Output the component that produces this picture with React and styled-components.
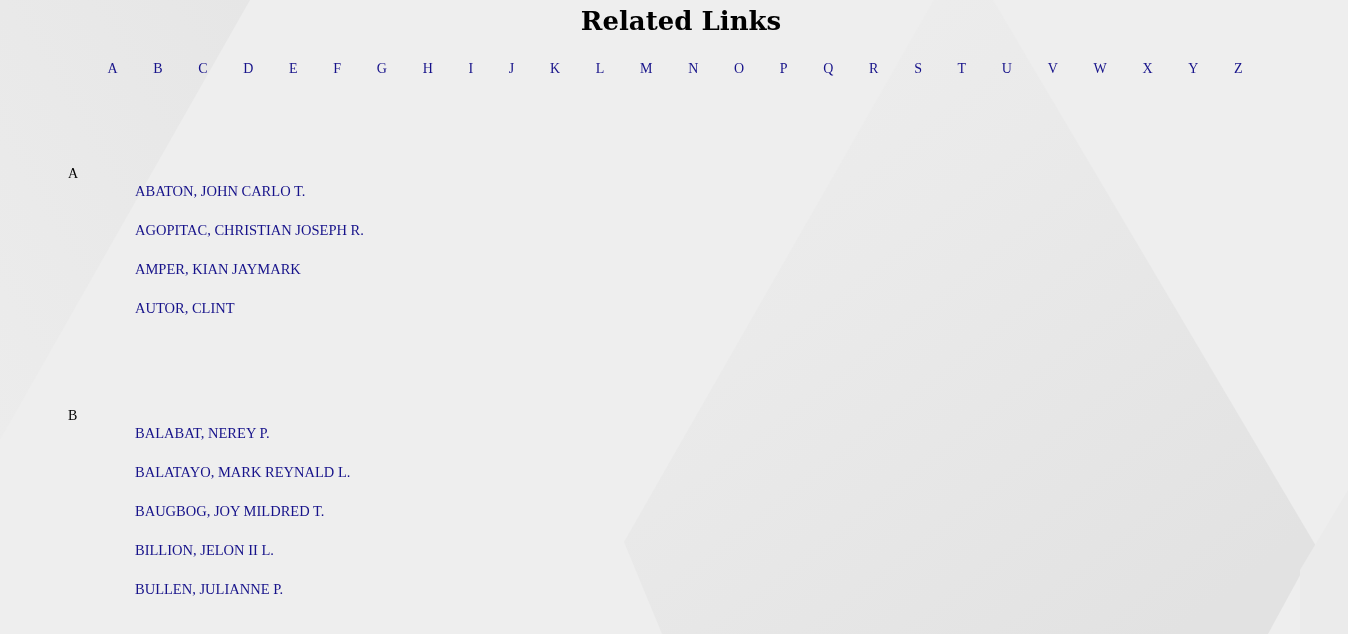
import styled, { createGlobalStyle } from "styled-components"

const GlobalStyle = createGlobalStyle`
    html, body {
        margin: 0;
        padding: 0;
        background-color: #eeeeee;
        font-family: "Liberation Serif", "DejaVu Serif", serif;
    }
`

const letters = "ABCDEFGHIJKLMNOPQRSTUVWXYZ".split("")

const groups = [
    {
        letter: "A",
        names: [
            "ABATON, JOHN CARLO T.",
            "AGOPITAC, CHRISTIAN JOSEPH R.",
            "AMPER, KIAN JAYMARK",
            "AUTOR, CLINT",
        ],
    },
    {
        letter: "B",
        names: [
            "BALABAT, NEREY P.",
            "BALATAYO, MARK REYNALD L.",
            "BAUGBOG, JOY MILDRED T.",
            "BILLION, JELON II L.",
            "BULLEN, JULIANNE P.",
        ],
    },
]

const Backdrop = () => {
    return (
        <Svg viewBox="0 0 1348 634" preserveAspectRatio="none">
            <defs>
                <linearGradient id="big" x1="0" y1="0" x2="0.8" y2="1">
                    <stop offset="0" stopColor="#efefef" />
                    <stop offset="0.45" stopColor="#eaeaea" />
                    <stop offset="1" stopColor="#e2e2e2" />
                </linearGradient>
                <linearGradient id="corner" x1="1" y1="0" x2="0" y2="1">
                    <stop offset="0" stopColor="#e6e6e6" />
                    <stop offset="1" stopColor="#ececec" />
                </linearGradient>
            </defs>
            <polygon points="0,0 250,0 0,440" fill="url(#corner)" />
            <polygon points="963,-51 1316,546 1268,634 662,634 624,542" fill="url(#big)" />
            <polygon points="1348,490 1348,634 1300,634 1300,570" fill="#ebebeb" />
        </Svg>
    )
}

const App = () => {
    return (
        <Page>
            <GlobalStyle />
            <Backdrop />
            <Title>Related Links</Title>
            <Nav>
                {letters.map((l) => (
                    <NavLink key={l} href={"#" + l}>{l}</NavLink>
                ))}
            </Nav>
            <Groups>
                {groups.map((g) => (
                    <Group key={g.letter} id={g.letter}>
                        <Label>{g.letter}</Label>
                        <List>
                            {g.names.map((n) => (
                                <Item key={n}>
                                    <NameLink href="#">{n}</NameLink>
                                </Item>
                            ))}
                        </List>
                    </Group>
                ))}
            </Groups>
        </Page>
    )
}

export default App

const Svg = styled.svg`
    position: fixed;
    top: 0;
    left: 0;
    width: 100vw;
    height: 100vh;
    z-index: 0;
    pointer-events: none;
`

const Page = styled.div`
    position: relative;
    min-height: 100vh;
`

const Title = styled.h1`
    position: relative;
    margin: 0;
    font-family: "DejaVu Serif", "Liberation Serif", serif;
    font-size: 26px;
    line-height: 43px;
    font-weight: bold;
    text-align: center;
    color: #000;
    padding-left: 14px;
`

const Nav = styled.nav`
    position: relative;
    display: flex;
    justify-content: center;
    gap: 35.7px;
    margin-top: 16px;
    padding-left: 2px;
    line-height: 20px;
    font-size: 14px;
`

const NavLink = styled.a`
    color: #16128a;
    text-decoration: none;
`

const Groups = styled.div`
    position: relative;
    padding-left: 68px;
    padding-top: 87px;
    display: flex;
    flex-direction: column;
    gap: 91px;
`

const Group = styled.div`
    display: flex;
    flex-direction: column;
`

const Label = styled.div`
    font-size: 14px;
    line-height: 16px;
    color: #000;
`

const List = styled.ul`
    list-style: none;
    margin: 0 0 0 67px;
    padding: 0;
    display: flex;
    flex-direction: column;
    gap: 21px;
`

const Item = styled.li`
    font-size: 14.5px;
    line-height: 18px;
`

const NameLink = styled.a`
    color: #16128a;
    text-decoration: none;
`
